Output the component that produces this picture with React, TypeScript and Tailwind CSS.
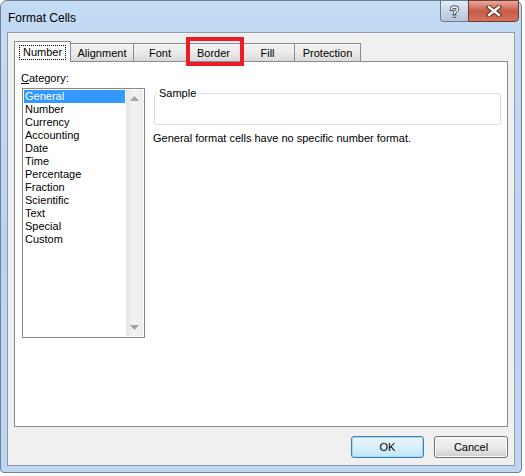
import React from 'react';

const categories = [
  'General',
  'Number',
  'Currency',
  'Accounting',
  'Date',
  'Time',
  'Percentage',
  'Fraction',
  'Scientific',
  'Text',
  'Special',
  'Custom',
];

const tabs = [
  { label: 'Alignment', w: 'w-[64px]' },
  { label: 'Font', w: 'w-[54px]' },
  { label: 'Border', w: 'w-[55px]' },
  { label: 'Fill', w: 'w-[55px]' },
  { label: 'Protection', w: 'w-[67px]' },
];

const font = { fontFamily: '"Liberation Sans", Arial, sans-serif' };

const TitleButtons = () => (
  <div className="flex -mr-[4px] -mt-px h-[22px]">
    <div className="w-[28px] h-full rounded-bl-[4px] border border-[#6b7b8e] border-r-0 bg-gradient-to-b from-[#e3ecf6] via-[#c9d7e7] to-[#b5c7dc] flex items-center justify-center">
      <svg width="11" height="13" viewBox="0 0 11 13">
        <path d="M2.5 4.2 C2.5 1.2 8.5 1.2 8.5 4.2 C8.5 6.2 5.5 6.2 5.5 8.2" fill="none" stroke="#4b5563" strokeWidth="3.4" strokeLinecap="square" />
        <path d="M2.5 4.2 C2.5 1.2 8.5 1.2 8.5 4.2 C8.5 6.2 5.5 6.2 5.5 8.2" fill="none" stroke="#ffffff" strokeWidth="1.6" strokeLinecap="square" />
        <rect x="3.8" y="9.6" width="3.4" height="3.2" fill="#4b5563" />
        <rect x="4.6" y="10.4" width="1.8" height="1.6" fill="#ffffff" />
      </svg>
    </div>
    <div className="w-[51px] h-full rounded-br-[4px] border border-[#6b3a33] bg-gradient-to-b from-[#e9a99b] via-[#c75b48] to-[#d6725c] flex items-center justify-center">
      <svg width="16" height="12" viewBox="0 0 16 12">
        <path d="M3 2 L13 10 M13 2 L3 10" stroke="#5a2a23" strokeWidth="4.4" strokeLinecap="square" />
        <path d="M3 2 L13 10 M13 2 L3 10" stroke="#ffffff" strokeWidth="2.4" strokeLinecap="square" />
      </svg>
    </div>
  </div>
);

const ScrollArrow = ({ down }: { down?: boolean }) => (
  <div className="h-[17px] flex items-center justify-center">
    <svg width="9" height="5" viewBox="0 0 9 5">
      <path d={down ? 'M0 0 H9 L4.5 5 Z' : 'M0 5 H9 L4.5 0 Z'} fill="#a3a3a3" />
    </svg>
  </div>
);

export default function App() {
  return (
    <div className="w-[525px] h-[476px] bg-white text-[11px] text-black" style={font}>
      <div className="relative w-[522px] h-[473px] rounded-t-[7px] rounded-b-[4px] border border-[#6e8094] bg-gradient-to-b from-[#c4dbf4] via-[#b9d4f1] to-[#bdd6f2] px-[6px] pb-[6px] flex flex-col">
        <div className="h-[31px] flex items-start justify-between">
          <span className="mt-[10px] ml-[1px] text-[12px] leading-[14px]">Format Cells</span>
          <TitleButtons />
        </div>

        <div className="flex-1 border border-[#8f9bab] bg-[#f0f0f0] px-[6px] pt-[8px] flex flex-col">
          <div className="flex items-end h-[20px]">
            <div className="relative z-10 -mb-px w-[57px] h-[21px] border border-b-0 border-[#898c95] bg-white flex items-start justify-center pt-[3px]">
              <span className="border border-dotted border-black px-[3px] leading-[13px] h-[15px]">Number</span>
            </div>
            {tabs.map((t) => (
              <div
                key={t.label}
                className={`${t.w} h-[18px] -ml-px border border-b-0 border-[#898c95] bg-gradient-to-b from-[#f3f3f3] via-[#ebebeb] to-[#d9d9d9] flex items-center justify-center leading-[14px]`}
              >
                {t.label}
              </div>
            ))}
          </div>

          <div className="w-[494px] h-[366px] border border-[#898c95] bg-white flex pl-[7px]">
            <div className="flex flex-col pt-[9px]">
              <span className="leading-[15px] -ml-px">
                <span className="underline">C</span>ategory:
              </span>
              <div className="mt-[2px] w-[123px] h-[250px] border border-[#828790] flex">
                <div className="flex-1 flex flex-col pt-px">
                  {categories.map((c, i) => (
                    <div
                      key={c}
                      className={`h-[13px] leading-[13px] ml-px w-[101px] pl-[1px] ${i === 0 ? 'bg-[#3399ff] text-white' : ''}`}
                    >
                      {c}
                    </div>
                  ))}
                </div>
                <div className="w-[17px] my-px mr-px bg-gradient-to-r from-[#e6e6e6] via-[#f3f3f3] to-[#ececec] flex flex-col justify-between">
                  <ScrollArrow />
                  <ScrollArrow down />
                </div>
              </div>
            </div>

            <div className="ml-[8px] pt-[31px] flex flex-col">
              <div className="relative ml-px w-[347px] h-[32px] rounded-[3px] border border-[#d5dfe5]">
                <span className="absolute -top-[8px] left-[3px] bg-white px-[1px] leading-[14px]">Sample</span>
              </div>
              <p className="mt-[6px] leading-[14px]">General format cells have no specific number format.</p>
            </div>
          </div>

          <div className="mt-[9px] flex justify-end gap-[10px]">
            <button className="w-[73px] h-[22px] rounded-[3px] border border-[#3c7fb1] bg-gradient-to-b from-[#eaf6fd] via-[#d9f0fc] to-[#bee6fd] shadow-[inset_0_0_0_1px_#a7d8f3]">
              OK
            </button>
            <button className="w-[74px] h-[22px] rounded-[3px] border border-[#707070] bg-gradient-to-b from-[#f2f2f2] via-[#ebebeb] to-[#cfcfcf] shadow-[inset_0_0_0_1px_#fcfcfc]">
              Cancel
            </button>
          </div>
        </div>

        <div className="absolute left-[185px] top-[36px] w-[58px] h-[29px] border-[4px] border-[#ed1c24] z-20" />
      </div>
    </div>
  );
}
